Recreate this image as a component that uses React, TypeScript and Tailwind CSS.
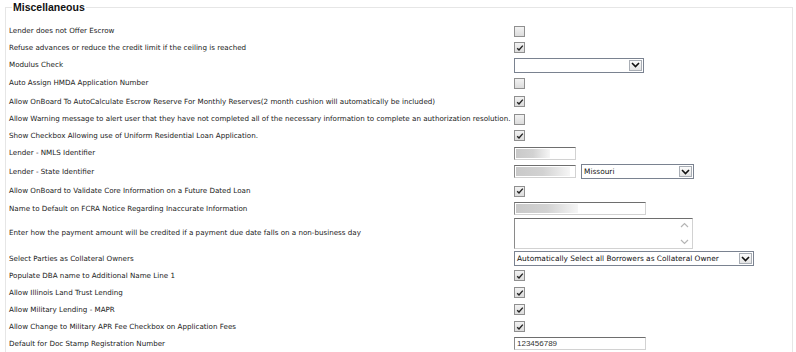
import React from "react";

const labelFont = { fontFamily: '"DejaVu Sans", Verdana, sans-serif' } as const;

function Check({ checked }: { checked?: boolean }) {
  return (
    <span className="flex h-[11px] w-[11px] items-center justify-center border border-[#8f8f8f] bg-gradient-to-b from-[#f2f2f2] to-[#dcdcdc]">
      {checked && (
        <svg width="8" height="8" viewBox="0 0 8 8">
          <path d="M1.2 4.2 L3 6 L6.8 1.6" fill="none" stroke="#222" strokeWidth="1.4" />
        </svg>
      )}
    </span>
  );
}

function Chevron() {
  return (
    <svg width="9" height="6" viewBox="0 0 9 6">
      <path d="M1 1 L4.5 4.5 L8 1" fill="none" stroke="#111" strokeWidth="1.6" />
    </svg>
  );
}

function Select({ w, text }: { w: string; text?: string }) {
  return (
    <div className={`flex h-[15px] items-stretch border border-[#7a8290] bg-white ${w}`}>
      <div className="flex flex-1 items-center overflow-hidden whitespace-nowrap pl-[2px] text-[7.4px] text-[#111]" style={labelFont}>
        {text}
      </div>
      <div className="m-[1px] flex w-[13px] items-center justify-center border border-[#a9aeb5] bg-gradient-to-b from-[#fbfbfb] to-[#e4e4e4]">
        <Chevron />
      </div>
    </div>
  );
}

function Input({ w, blur, text }: { w: string; blur?: string; text?: string }) {
  return (
    <div className={`relative flex h-[13px] items-center border border-t-[#6e6e6e] border-l-[#8a8a8a] border-r-[#d2d2d2] border-b-[#d2d2d2] bg-white ${w}`}>
      {blur && (
        <div className={`ml-[1px] h-[9px] bg-gradient-to-r from-[#c9c9c9] via-[#d2d2d2] to-[#f6f6f6] ${blur}`} />
      )}
      {text && (
        <span className="pl-[2px] text-[8px] leading-none text-[#333]" style={{ fontFamily: '"Liberation Sans", Arial, sans-serif' }}>
          {text}
        </span>
      )}
    </div>
  );
}

type Row = { label: string; h: string; control: React.ReactNode };

const rows: Row[] = [
  { label: "Lender does not Offer Escrow", h: "h-[16px]", control: <Check /> },
  { label: "Refuse advances or reduce the credit limit if the ceiling is reached", h: "h-[17px]", control: <Check checked /> },
  { label: "Modulus Check", h: "h-[18px]", control: <Select w="w-[130px]" /> },
  { label: "Auto Assign HMDA Application Number", h: "h-[18px]", control: <Check /> },
  { label: "Allow OnBoard To AutoCalculate Escrow Reserve For Monthly Reserves(2 month cushion will automatically be included)", h: "h-[19px]", control: <Check checked /> },
  { label: "Allow Warning message to alert user that they have not completed all of the necessary information to complete an authorization resolution.", h: "h-[16px]", control: <Check /> },
  { label: "Show Checkbox Allowing use of Uniform Residential Loan Application.", h: "h-[17px]", control: <Check checked /> },
  { label: "Lender - NMLS Identifier", h: "h-[18px]", control: <Input w="w-[62px]" blur="w-[34px]" /> },
  {
    label: "Lender - State Identifier",
    h: "h-[19px]",
    control: (
      <div className="flex items-center gap-[5px]">
        <Input w="w-[62px]" blur="w-[54px]" />
        <Select w="w-[113px]" text="Missouri" />
      </div>
    ),
  },
  { label: "Allow OnBoard to Validate Core Information on a Future Dated Loan", h: "h-[20px]", control: <Check checked /> },
  { label: "Name to Default on FCRA Notice Regarding Inaccurate Information", h: "h-[15px]", control: <Input w="w-[132px]" blur="w-[62px]" /> },
  {
    label: "Enter how the payment amount will be credited if a payment due date falls on a non-business day",
    h: "h-[34px]",
    control: (
      <div className="flex h-[31px] w-[179px] justify-end border border-t-[#6e6e6e] border-l-[#8a8a8a] border-r-[#d2d2d2] border-b-[#d2d2d2] bg-white">
        <div className="flex w-[16px] flex-col items-center justify-between py-[3px]">
          <svg width="9" height="6" viewBox="0 0 9 6">
            <path d="M1 5 L4.5 1.5 L8 5" fill="none" stroke="#b5b5b5" strokeWidth="1.2" />
          </svg>
          <svg width="9" height="6" viewBox="0 0 9 6">
            <path d="M1 1 L4.5 4.5 L8 1" fill="none" stroke="#b5b5b5" strokeWidth="1.2" />
          </svg>
        </div>
      </div>
    ),
  },
  { label: "Select Parties as Collateral Owners", h: "h-[17px]", control: <Select w="w-[240px]" text="Automatically Select all Borrowers as Collateral Owner" /> },
  { label: "Populate DBA name to Additional Name Line 1", h: "h-[17px]", control: <Check checked /> },
  { label: "Allow Illinois Land Trust Lending", h: "h-[17px]", control: <Check checked /> },
  { label: "Allow Military Lending - MAPR", h: "h-[17px]", control: <Check checked /> },
  { label: "Allow Change to Military APR Fee Checkbox on Application Fees", h: "h-[17px]", control: <Check checked /> },
  { label: "Default for Doc Stamp Registration Number", h: "h-[17px]", control: <Input w="w-[132px]" text="123456789" /> },
];

export default function App() {
  return (
    <div className="h-[352px] w-[796px] overflow-hidden bg-white">
      <fieldset className="ml-[5px] mt-0 h-[400px] w-[788px] border border-[#e6e6e6] pl-[3px]">
        <legend
          className="ml-[3px] px-[1px] text-[10.5px] font-bold leading-[15px] text-[#111]"
          style={{ fontFamily: '"Liberation Sans", Arial, sans-serif' }}
        >
          Miscellaneous
        </legend>
        <div className="mt-[8px] flex flex-col">
          {rows.map((r, i) => (
            <div key={i} className={`flex items-center ${r.h}`}>
              <div className="w-[505px] shrink-0 whitespace-nowrap text-[7.15px] leading-none text-[#222]" style={labelFont}>
                {r.label}
              </div>
              <div className="flex items-center">{r.control}</div>
            </div>
          ))}
        </div>
      </fieldset>
    </div>
  );
}
